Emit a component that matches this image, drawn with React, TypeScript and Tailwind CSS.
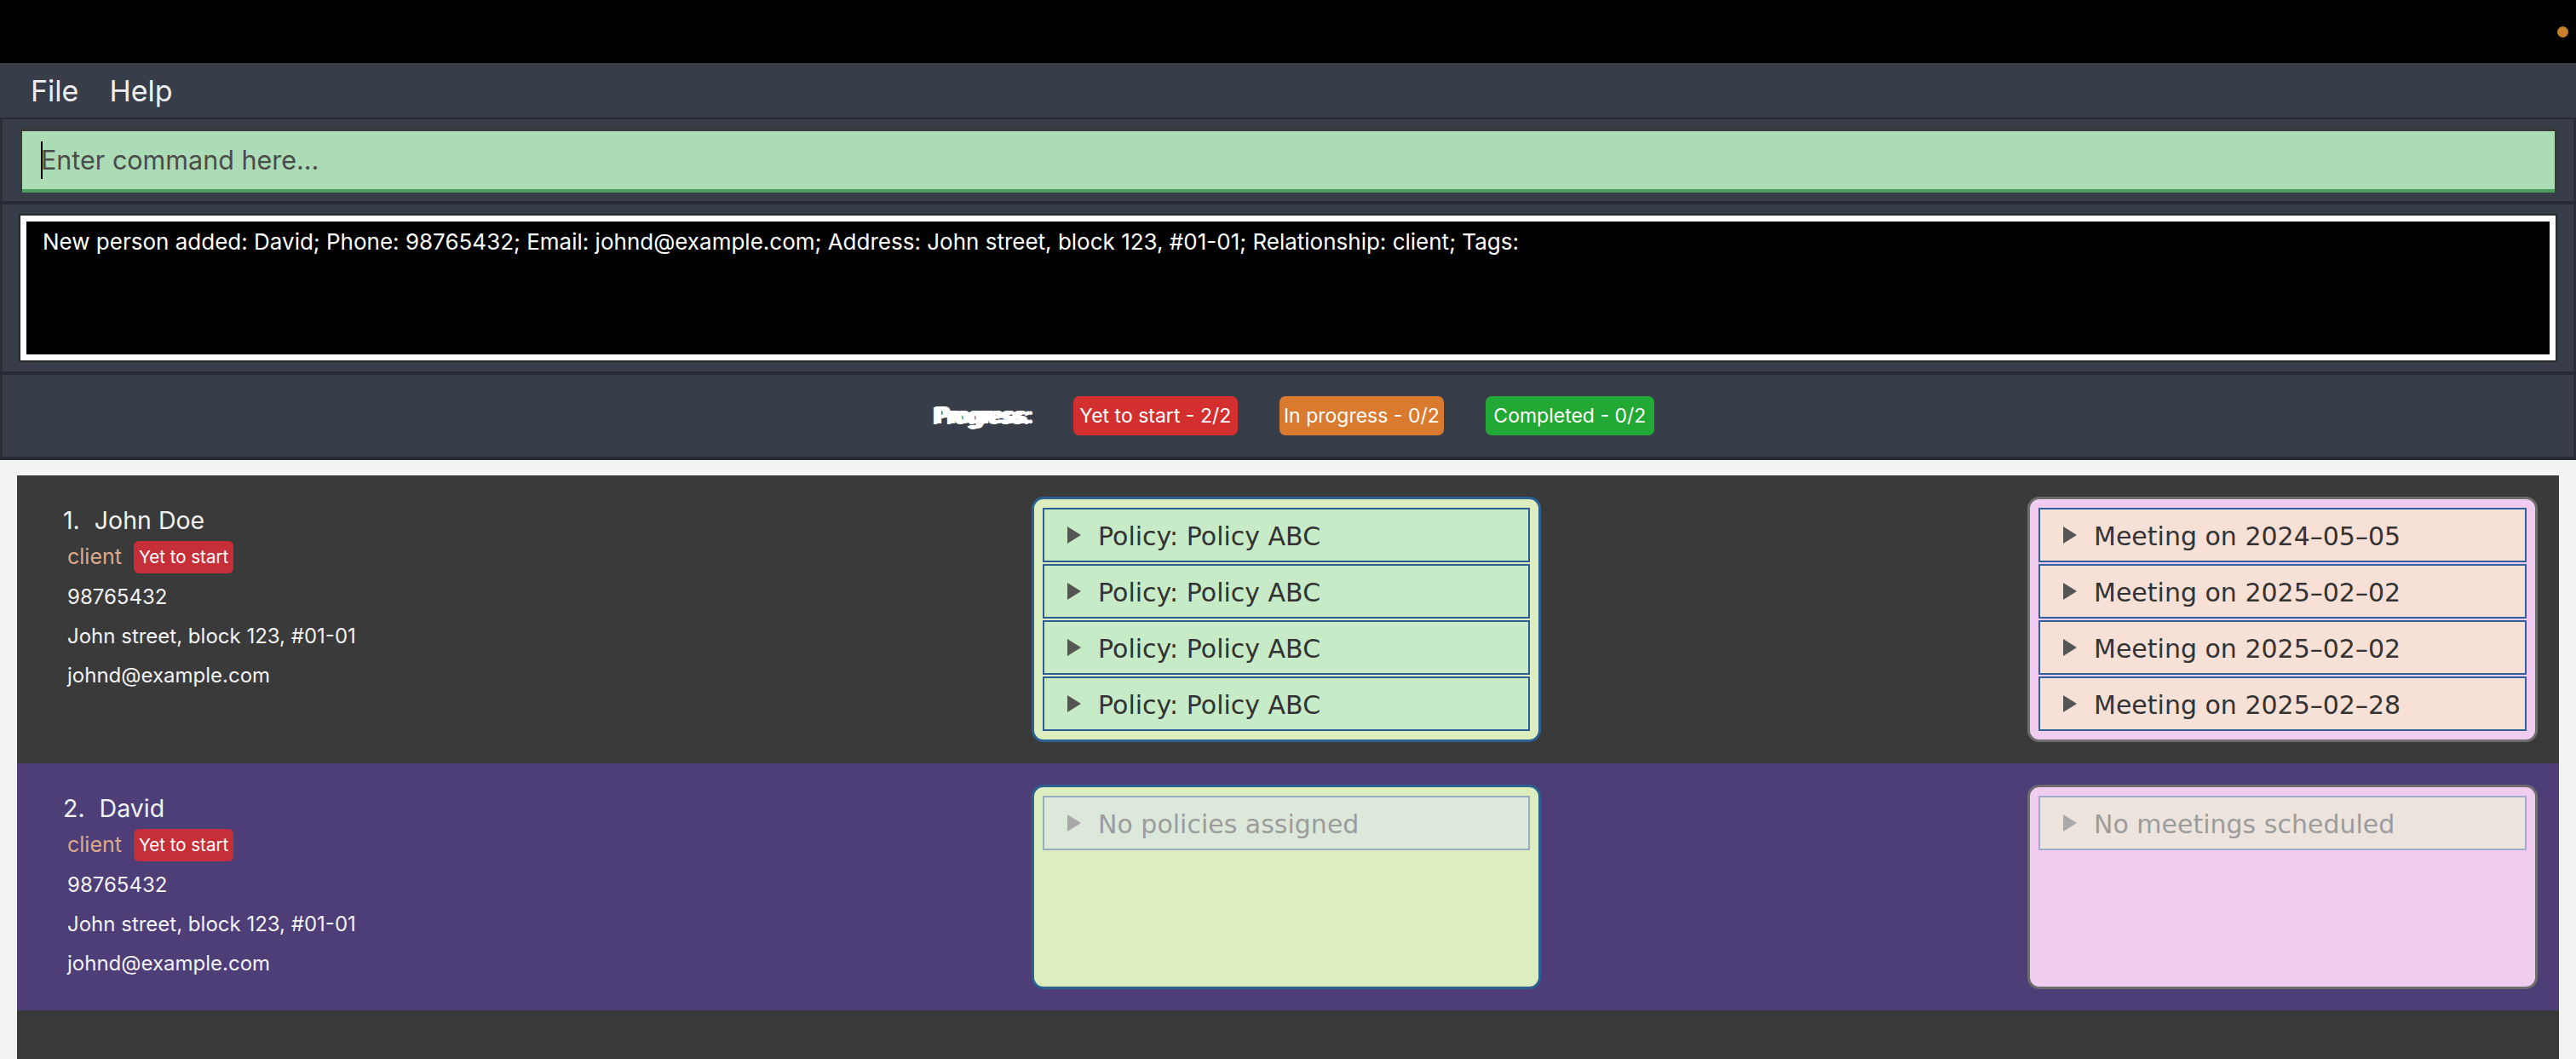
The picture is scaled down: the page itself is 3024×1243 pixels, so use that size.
import React from 'react';

type Person = {
  index: number;
  name: string;
  phone: string;
  address: string;
  email: string;
  relationship: string;
  status: string;
  policies: string[];
  meetings: string[];
  cardBg: string;
};

const people: Person[] = [
  {
    index: 1,
    name: 'John Doe',
    phone: '98765432',
    address: 'John street, block 123, #01-01',
    email: 'johnd@example.com',
    relationship: 'client',
    status: 'Yet to start',
    policies: ['Policy: Policy ABC', 'Policy: Policy ABC', 'Policy: Policy ABC', 'Policy: Policy ABC'],
    meetings: ['Meeting on 2024–05–05', 'Meeting on 2025–02–02', 'Meeting on 2025–02–02', 'Meeting on 2025–02–28'],
    cardBg: 'bg-[#3a3a3a]',
  },
  {
    index: 2,
    name: 'David',
    phone: '98765432',
    address: 'John street, block 123, #01-01',
    email: 'johnd@example.com',
    relationship: 'client',
    status: 'Yet to start',
    policies: [],
    meetings: [],
    cardBg: 'bg-[#4d3e78]',
  },
];

function Arrow({ muted }: { muted?: boolean }) {
  return (
    <svg width="16" height="20" viewBox="0 0 16 20" className="shrink-0">
      <polygon points="0,0 16,10 0,20" fill={muted ? '#a9a9a9' : '#555555'} />
    </svg>
  );
}

function AccordionItem({ label, itemBg, borderColor, muted }: { label: string; itemBg: string; borderColor: string; muted?: boolean }) {
  return (
    <div className={`h-[64px] border-2 ${borderColor} ${itemBg} flex items-center pl-[27px] gap-[20px]`}>
      <Arrow muted={muted} />
      <span className={`font-['DejaVu_Sans',sans-serif] text-[30px] pt-[2px] ${muted ? 'text-[#9c9c9c]' : 'text-[#333333]'}`}>
        {label}
      </span>
    </div>
  );
}

function PersonCard({ p }: { p: Person }) {
  return (
    <div className={`${p.cardBg} flex py-[25px]`}>
      {/* info column */}
      <div className="w-[1191px] shrink-0 pt-[10px] pl-[54px] text-[#f2f2f2]">
        <div className="flex text-[28.5px] leading-[36px]">
          <span>{p.index}.</span>
          <span className="ml-[17px]">{p.name}</span>
        </div>
        <div className="flex items-center h-[38px] mt-[6px] pl-[5px] gap-[14px]">
          <span className="text-[25px] text-[#dcaa8a]">{p.relationship}</span>
          <span className="bg-[#c62f37] text-white text-[20.5px] leading-[38px] h-[38px] px-[6px] rounded-[6px]">
            {p.status}
          </span>
        </div>
        <div className="pl-[5px] mt-[5px] text-[24px] leading-[46px]">
          <div>{p.phone}</div>
          <div>{p.address}</div>
          <div>{p.email}</div>
        </div>
      </div>

      {/* policies */}
      <div className="w-[598px] shrink-0 min-h-[240px] rounded-[14px] border-[3px] border-[#2b6190] bg-[#dcedc0] p-[10px] flex flex-col gap-[2px]">
        {p.policies.length > 0 ? (
          p.policies.map((pol, i) => (
            <AccordionItem key={i} label={pol} itemBg="bg-[#c7ebc7]" borderColor="border-[#2e5c95]" />
          ))
        ) : (
          <AccordionItem label="No policies assigned" itemBg="bg-[#dce9da]" borderColor="border-[#95aec1]" muted />
        )}
      </div>

      <div className="flex-1" />

      {/* meetings */}
      <div className="w-[599px] shrink-0 min-h-[240px] rounded-[14px] border-[3px] border-[#6d6d6d] bg-[#f0cdf0] p-[10px] flex flex-col gap-[2px]">
        {p.meetings.length > 0 ? (
          p.meetings.map((m, i) => (
            <AccordionItem key={i} label={m} itemBg="bg-[#f7e0d6]" borderColor="border-[#33609a]" />
          ))
        ) : (
          <AccordionItem label="No meetings scheduled" itemBg="bg-[#ede4de]" borderColor="border-[#a3abcc]" muted />
        )}
      </div>

      <div className="w-[25px] shrink-0" />
    </div>
  );
}

export default function App() {
  return (
    <div className="h-[1243px] overflow-hidden flex flex-col bg-[#373d49] font-['Inter',sans-serif]">
      {/* title strip */}
      <div className="h-[74px] shrink-0 bg-black flex items-center justify-end pr-[9px]">
        <div className="w-[13px] h-[13px] rounded-full bg-[#c8802c]" />
      </div>

      {/* menu bar */}
      <div className="h-[64px] shrink-0 flex items-center pl-[36px] gap-[36px] text-[34px] text-[#f0f0f0]">
        <span>File</span>
        <span>Help</span>
      </div>
      <div className="h-[2px] shrink-0 bg-[#262a32]" />

      {/* command box */}
      <div className="h-[96px] shrink-0 border-x-[3px] border-[#2a2e36] pl-[20px] pr-[19px] pt-[10px]">
        <div className="border-t-4 border-x-[3px] border-[#3a3a3a]">
          <div className="h-[68px] bg-[#acdcb6] flex items-center pl-[22px] relative">
            <div className="absolute left-[22px] top-[12px] w-[2px] h-[44px] bg-black" />
            <span className="text-[30.5px] text-[#4b4b4b]">Enter command here...</span>
          </div>
          <div className="h-[4px] bg-[#4c9e5e]" />
        </div>
      </div>
      <div className="h-[4px] shrink-0 bg-[#262a32]" />

      {/* result display */}
      <div className="h-[196px] shrink-0 border-x-[3px] border-[#2a2e36] pl-[19px] pr-[19px] pt-[11px]">
        <div className="border-2 border-[#2b2b2b]">
          <div className="border-[7px] border-white bg-black h-[170px] pl-[19px] pt-[9px]">
            <p className="text-[26px] leading-[30px] text-white">
              New person added: David; Phone: 98765432; Email: johnd@example.com; Address: John street, block 123, #01-01; Relationship: client; Tags:
            </p>
          </div>
        </div>
      </div>
      <div className="h-[4px] shrink-0 bg-[#262a32]" />

      {/* progress */}
      <div className="h-[96px] shrink-0 border-x-[3px] border-[#2a2e36] flex items-center justify-center gap-[50px] pl-[14px]">
        <span className="text-[27px] font-bold text-white tracking-[-1.5px] [text-shadow:3px_0_0_#ffffff,-2px_1px_0_#ffffff]">
          Progress:
        </span>
        <div className="flex gap-[49px] text-[23px] text-white">
          <span className="w-[193px] h-[46px] rounded-[7px] bg-[#d32f2f] flex items-center justify-center">Yet to start - 2/2</span>
          <span className="w-[193px] h-[46px] rounded-[7px] bg-[#d97a2f] flex items-center justify-center">In progress - 0/2</span>
          <span className="w-[198px] h-[46px] rounded-[7px] bg-[#22a834] flex items-center justify-center">Completed - 0/2</span>
        </div>
      </div>
      <div className="h-[4px] shrink-0 bg-[#262a32]" />

      {/* person list */}
      <div className="flex-1 flex flex-col bg-[#f3f3f3] pt-[18px] px-[20px]">
        {people.map((p) => (
          <PersonCard key={p.index} p={p} />
        ))}
        <div className="flex-1 bg-[#393939]" />
      </div>
    </div>
  );
}
